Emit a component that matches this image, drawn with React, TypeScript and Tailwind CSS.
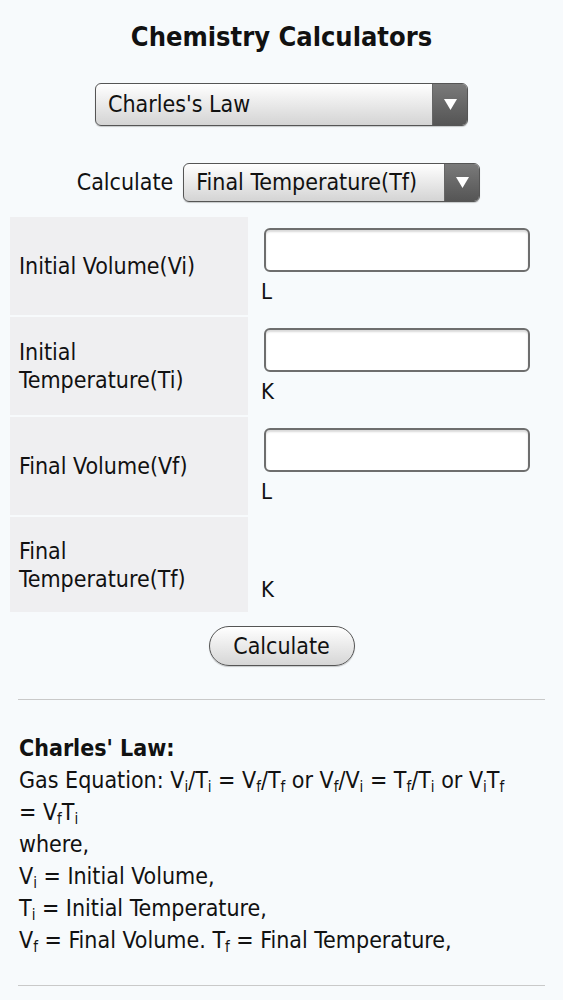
import React from 'react';

const font = { fontFamily: '"DejaVu Sans Condensed", "DejaVu Sans", sans-serif' };

const Arrow = () => (
  <div className="flex w-[35px] shrink-0 items-center justify-center self-stretch border-l border-[#666] bg-gradient-to-b from-[#7a7a7a] to-[#555]">
    <svg width="15" height="13" viewBox="0 0 15 13">
      <polygon points="1,1 14,1 7.5,12" fill="#fff" />
    </svg>
  </div>
);

const Select = ({ label, className }: { label: string; className: string }) => (
  <div
    className={`flex overflow-hidden rounded-md border border-[#555] bg-gradient-to-b from-white to-[#d4d4d4] shadow-[0_1px_1px_rgba(0,0,0,0.2)] ${className}`}
  >
    <div className="flex flex-1 items-center px-[12px] text-[23px] text-[#111]">{label}</div>
    <Arrow />
  </div>
);

const rows = [
  { label: ['Initial Volume(Vi)'], unit: 'L', input: true },
  { label: ['Initial', 'Temperature(Ti)'], unit: 'K', input: true },
  { label: ['Final Volume(Vf)'], unit: 'L', input: true },
  { label: ['Final', 'Temperature(Tf)'], unit: 'K', input: false },
];

const S = ({ c }: { c: string }) => <sub className="text-[15px] leading-none">{c}</sub>;

export default function App() {
  return (
    <div className="min-h-screen bg-[#f7fafc] text-[#111]" style={font}>
      <h1 className="pt-[21px] text-center text-[27px] font-bold leading-[32px]">Chemistry Calculators</h1>

      <div className="mt-[30px] flex justify-center">
        <Select label="Charles's Law" className="h-[43px] w-[373px]" />
      </div>

      <div className="mt-[37px] flex items-center justify-center gap-[10px] pr-[6px]">
        <span className="text-[23px]">Calculate</span>
        <Select label="Final Temperature(Tf)" className="h-[39px] w-[297px]" />
      </div>

      <div className="mx-[10px] mt-[15px] flex flex-col gap-[2px]">
        {rows.map((r, i) => (
          <div key={i} className={`flex ${i === 3 ? 'h-[95px]' : 'h-[98px]'}`}>
            <div className="flex w-[238px] shrink-0 flex-col justify-center bg-[#efeff1] pl-[9px] text-[23px] leading-[28px]">
              {r.label.map((l) => (
                <span key={l}>{l}</span>
              ))}
            </div>
            <div className="flex flex-1 flex-col justify-center pl-[13px]">
              {r.input ? (
                <input
                  type="text"
                  className="ml-[3px] h-[44px] w-[266px] rounded-md border-2 border-[#6e6e6e] bg-white shadow-[inset_0_2px_2px_rgba(0,0,0,0.15)] outline-none"
                />
              ) : (
                <div className="invisible h-[44px]" />
              )}
              <span className="mt-[7px] text-[22px] leading-[26px]">{r.unit}</span>
            </div>
          </div>
        ))}
      </div>

      <div className="mt-[14px] flex justify-center">
        <button className="h-[40px] w-[146px] rounded-full border border-[#555] bg-gradient-to-b from-white to-[#d6d6d6] text-[23px] text-[#111] shadow-[0_1px_1px_rgba(0,0,0,0.2)]">
          Calculate
        </button>
      </div>

      <hr className="mx-[18px] mt-[33px] border-t border-[#c9c9c9]" />

      <div className="px-[19px] pt-[32px] text-[23px] leading-[32px]">
        <div className="font-bold">Charles' Law:</div>
        <div>
          Gas Equation: V<S c="i" />/T<S c="i" /> = V<S c="f" />/T<S c="f" /> or V<S c="f" />/V<S c="i" /> = T
          <S c="f" />/T<S c="i" /> or V<S c="i" />T<S c="f" />
          <br />= V<S c="f" />T<S c="i" />
        </div>
        <div>where,</div>
        <div>
          V<S c="i" /> = Initial Volume,
        </div>
        <div>
          T<S c="i" /> = Initial Temperature,
        </div>
        <div>
          V<S c="f" /> = Final Volume. T<S c="f" /> = Final Temperature,
        </div>
      </div>

      <hr className="mx-[18px] mt-[29px] border-t border-[#c9c9c9]" />
      <div className="h-[20px]" />
    </div>
  );
}
